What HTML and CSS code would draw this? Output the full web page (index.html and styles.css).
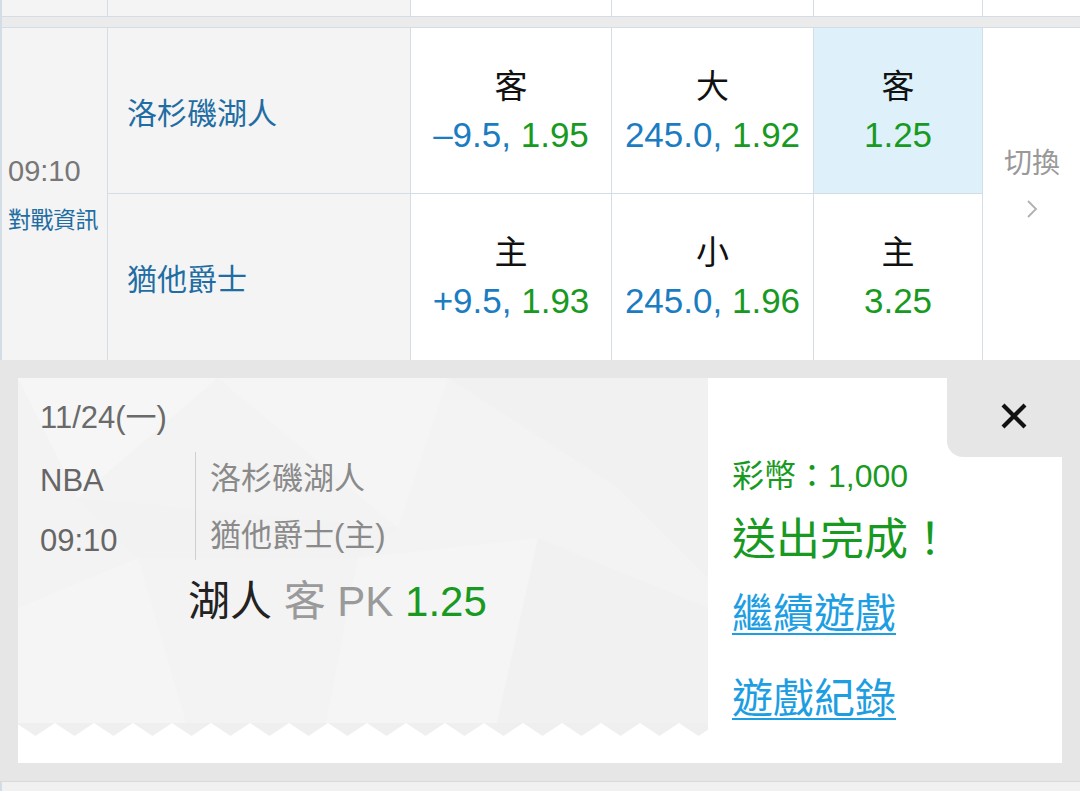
FILE: index.html
```html
<!DOCTYPE html>
<html lang="zh-Hant">
<head>
<meta charset="utf-8">
<title>Bet</title>
<link rel="stylesheet" href="styles.css">
</head>
<body>
<div class="page">
  <div class="table">
    <div class="prev-row">
      <div class="pc gray"></div>
      <div class="pc gray"></div>
      <div class="pc"></div>
      <div class="pc"></div>
      <div class="pc"></div>
      <div class="pc last"></div>
    </div>
    <div class="band"></div>
    <div class="match">
      <div class="time-cell">
        <div class="time">09:10</div>
        <div class="info">對戰資訊</div>
      </div>
      <div class="team top">洛杉磯湖人</div>
      <div class="odds top">
        <div class="lbl">客</div>
        <div class="num"><span class="blue">–9.5, </span><span class="green">1.95</span></div>
      </div>
      <div class="odds top">
        <div class="lbl">大</div>
        <div class="num"><span class="blue">245.0, </span><span class="green">1.92</span></div>
      </div>
      <div class="odds top selected">
        <div class="lbl">客</div>
        <div class="num"><span class="green">1.25</span></div>
      </div>
      <div class="switch">
        <div class="switch-text">切換</div>
        <svg class="chev" width="12" height="20" viewBox="0 0 12 20"><polyline points="2,2 10,10 2,18" fill="none" stroke="#b0b0b0" stroke-width="1.8"/></svg>
      </div>
      <div class="team">猶他爵士</div>
      <div class="odds">
        <div class="lbl">主</div>
        <div class="num"><span class="blue">+9.5, </span><span class="green">1.93</span></div>
      </div>
      <div class="odds">
        <div class="lbl">小</div>
        <div class="num"><span class="blue">245.0, </span><span class="green">1.96</span></div>
      </div>
      <div class="odds">
        <div class="lbl">主</div>
        <div class="num"><span class="green">3.25</span></div>
      </div>
    </div>
  </div>

  <div class="overlay">
    <div class="card">
      <div class="ticket">
        <svg class="facets" width="690" height="385" viewBox="0 0 690 385">
          <polygon points="0,0 200,0 60,120" fill="#f6f6f6"/>
          <polygon points="200,0 430,0 380,150" fill="#f5f5f5"/>
          <polygon points="430,0 690,0 690,200 600,110" fill="#f1f1f1"/>
          <polygon points="0,230 120,180 180,385 0,385" fill="#f5f5f5"/>
          <polygon points="340,180 520,160 470,385 300,385" fill="#f5f5f5"/>
          <polygon points="520,160 690,230 690,385 470,385" fill="#f1f1f1"/>
          <polygon points="60,120 380,150 340,180 120,180" fill="#f2f2f2"/>
        </svg>
        <div class="ticket-body">
          <div class="date">11/24(一)</div>
          <div class="game">
            <div class="game-meta">
              <div>NBA</div>
              <div>09:10</div>
            </div>
            <div class="divider"></div>
            <div class="game-teams">
              <div>洛杉磯湖人</div>
              <div>猶他爵士(主)</div>
            </div>
          </div>
          <div class="bet"><span class="pick">湖人</span> <span class="kind">客 PK</span> <span class="green">1.25</span></div>
        </div>
        <div class="zigzag">
          <svg width="690" height="13" viewBox="0 0 690 13">
            <defs>
              <pattern id="teeth" x="-2" y="0" width="39" height="13" patternUnits="userSpaceOnUse">
                <polygon points="0,0 39,0 19.5,13" fill="#efefef"/>
              </pattern>
            </defs>
            <rect x="0" y="0" width="690" height="13" fill="url(#teeth)"/>
          </svg>
        </div>
      </div>
      <div class="result">
        <button class="close" type="button" aria-label="close">
          <svg width="28" height="28" viewBox="0 0 28 28"><path d="M3 3 L25 25 M25 3 L3 25" stroke="#111" stroke-width="4.2"/></svg>
        </button>
        <div class="coins">彩幣：1,000</div>
        <div class="done">送出完成！</div>
        <a class="link first" href="#">繼續遊戲</a>
        <a class="link" href="#">遊戲紀錄</a>
      </div>
    </div>
  </div>
  <div class="next-row"></div>
</div>
</body>
</html>
```

FILE: styles.css
```css
* { box-sizing: border-box; }

html, body {
  margin: 0;
  padding: 0;
}

body {
  width: 1080px;
  height: 791px;
  overflow: hidden;
  background: #e6e6e6;
  font-family: "Liberation Sans", "Noto Sans CJK TC", sans-serif;
}

.page {
  width: 1080px;
  height: 791px;
  display: flex;
  flex-direction: column;
}

.table {
  background: #fff;
  border-left: 2px solid #d3dde6;
}

.prev-row {
  display: grid;
  grid-template-columns: 106px 303px 201px 202px 169px 97px;
  height: 17px;
  border-bottom: 1px solid #d3dde6;
}

.pc {
  border-right: 1px solid #d3dde6;
  background: #fff;
}

.pc.gray { background: #f4f4f4; }
.pc.last { border-right: none; }

.band {
  height: 10px;
  background: #ebebeb;
}

.match {
  display: grid;
  grid-template-columns: 106px 303px 201px 202px 169px 97px;
  grid-template-rows: 166px 166px;
  border-top: 1px solid #d3dde6;
}

.time-cell {
  grid-column: 1;
  grid-row: 1 / 3;
  background: #f4f4f4;
  border-right: 1px solid #d3dde6;
  display: flex;
  flex-direction: column;
  justify-content: center;
  gap: 17px;
  padding-left: 6px;
}

.time {
  font-size: 29px;
  line-height: 34px;
  color: #777;
}

.info {
  font-size: 23px;
  line-height: 30px;
  color: #1f6da3;
  letter-spacing: -0.5px;
}

.team {
  background: #f4f4f4;
  border-right: 1px solid #d3dde6;
  display: flex;
  align-items: center;
  padding-left: 19px;
  font-size: 30px;
  color: #1f6da3;
}

.top { border-bottom: 1px solid #d3dde6; }

.odds {
  background: #fff;
  border-right: 1px solid #d3dde6;
  display: flex;
  flex-direction: column;
  align-items: center;
  justify-content: center;
}

.odds.selected { background: #def1fb; }

.lbl {
  font-size: 33px;
  line-height: 48px;
  color: #111;
}

.num {
  font-size: 35px;
  line-height: 48px;
  white-space: pre;
}

.blue { color: #1b7cc1; }
.green { color: #179a1f; }

.switch {
  grid-column: 6;
  grid-row: 1 / 3;
  background: #fff;
  display: flex;
  flex-direction: column;
  align-items: center;
  justify-content: center;
  padding-bottom: 23px;
  padding-left: 1px;
}

.switch-text {
  font-size: 28px;
  line-height: 34px;
  color: #999;
}

.chev {
  margin-top: 18px;
}

.overlay {
  padding: 18px;
  background: #e6e6e6;
}

.card {
  display: flex;
  height: 385px;
}

.ticket {
  position: relative;
  width: 690px;
  background: #f3f3f3;
  display: flex;
  flex-direction: column;
}

.facets {
  position: absolute;
  left: 0;
  top: 0;
}

.ticket-body {
  position: relative;
  flex: 1;
  padding: 20px 0 0 22px;
}

.date {
  font-size: 31px;
  line-height: 40px;
  color: #6a6a6a;
}

.game {
  display: flex;
  align-items: flex-start;
  margin-top: 12px;
}

.game-meta {
  width: 155px;
  font-size: 31px;
  line-height: 60px;
  color: #666;
  padding-top: 1px;
}

.divider {
  width: 1px;
  height: 108px;
  margin-top: 2px;
  background: #cfcfcf;
}

.game-teams {
  padding-left: 14px;
  font-size: 31px;
  line-height: 57px;
  color: #8a8a8a;
}

.bet {
  margin-left: 148px;
  margin-top: 6px;
  font-size: 42px;
  line-height: 50px;
  white-space: pre;
}

.pick { color: #222; }
.kind { color: #9a9a9a; }

.zigzag {
  position: relative;
  height: 40px;
  background: #fff;
}

.zigzag svg { display: block; }

.result {
  position: relative;
  flex: 1;
  background: #fff;
  padding: 77px 0 0 24px;
  display: flex;
  flex-direction: column;
  align-items: flex-start;
}

.close {
  position: absolute;
  top: 0;
  right: -18px;
  width: 133px;
  height: 79px;
  border: none;
  padding: 0;
  margin: 0;
  background: #e6e6e6;
  border-bottom-left-radius: 16px;
  display: flex;
  align-items: center;
  justify-content: center;
  padding-bottom: 4px;
}

.close svg { display: block; }

.coins {
  font-size: 32px;
  line-height: 42px;
  color: #179a1f;
}

.done {
  margin-top: 14px;
  font-size: 44px;
  line-height: 58px;
  color: #179a1f;
}

.link {
  font-size: 41px;
  line-height: 52px;
  color: #1e9ee2;
  text-decoration: underline;
  text-decoration-thickness: 2px;
  text-underline-offset: 5px;
}

.link.first { margin-top: 19px; }
.link + .link { margin-top: 33px; }

.next-row {
  flex: 1;
  background: #f1f1f1;
  border-top: 1px solid #dadada;
  border-left: 2px solid #d3dde6;
}
```
